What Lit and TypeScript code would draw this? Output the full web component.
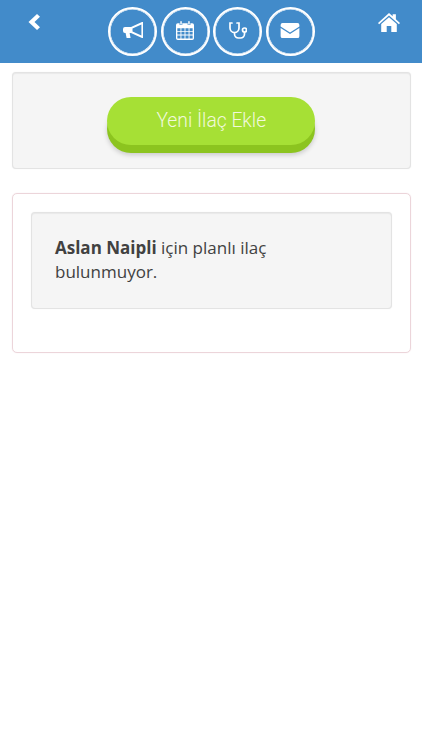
import { LitElement, html, css } from 'lit';
import { customElement } from 'lit/decorators.js';

@customElement('app-root')
export class AppRoot extends LitElement {
  static styles = css`
    :host {
      display: block;
      min-height: 750px;
      background: #fff;
      font-family: 'Open Sans', 'Noto Sans', sans-serif;
      color: #414141;
    }

    .topbar {
      height: 63px;
      box-sizing: border-box;
      background: #428bca;
      display: grid;
      grid-template-columns: 80px auto 1fr;
      padding: 7px 22px 0 28px;
    }

    .back {
      width: 12px;
      height: 16px;
      margin-top: 6.5px;
    }

    .home {
      justify-self: end;
      width: 22px;
      height: 19px;
      margin-top: 6px;
    }

    .nav {
      display: flex;
      gap: 3.5px;
    }

    .circle {
      width: 49px;
      height: 48.5px;
      box-sizing: border-box;
      border: 2px solid #fff;
      box-shadow: inset 0 0 0 0.6px #fff;
      border-radius: 50%;
      display: flex;
      align-items: center;
      justify-content: center;
      padding-bottom: 1px;
    }

    svg {
      display: block;
      fill: #fff;
    }

    .stetho {
      fill: none;
      stroke: #fff;
      stroke-width: 1.7;
    }

    .well {
      box-sizing: border-box;
      background: #f5f5f5;
      border: 1px solid #e3e3e3;
      border-radius: 4px;
      box-shadow: 0 0 1px #e3e3e3, inset 0 1px 1px rgba(0, 0, 0, 0.05);
    }

    .add {
      margin: 9px 11.5px 0 12px;
      height: 97px;
      display: flex;
      justify-content: center;
      padding-top: 24px;
    }

    .add-btn {
      width: 208px;
      height: 48px;
      border-radius: 24px;
      background: #a6e035;
      box-shadow: 0 8px 0 #8cc41f, 0 10px 5px rgba(0, 0, 0, 0.18);
      color: #f1f9dc;
      font-family: Roboto, sans-serif;
      font-weight: 300;
      font-size: 19.3px;
      line-height: 47px;
      text-align: center;
    }

    .panel {
      margin: 24px 11.5px 0 12px;
      height: 160px;
      box-sizing: border-box;
      border: 1px solid #ecd5da;
      border-radius: 5px;
      box-shadow: 0 0 1px #ecd5da;
      padding: 18px 18px 0;
    }

    .notice {
      height: 97px;
      padding: 23px 23px 0;
      font-size: 17px;
      line-height: 24px;
    }

    .notice p {
      margin: 0;
      max-width: 260px;
    }
  `;

  render() {
    return html`
      <header class="topbar">
        <svg class="back" viewBox="0 0 12 17" preserveAspectRatio="none"><path d="M9 0 L12 3 L6.5 8.5 L12 14 L9 17 L0.5 8.5 Z" /></svg>
        <nav class="nav">
          <div class="circle">
            <svg width="20" height="17" viewBox="0 0 20 17">
              <path fill-rule="evenodd" d="M20 0 V16 H19 L8 11 H6.6 L7.6 16 H3.6 L2.6 11 H2 A2 2 0 0 1 0 9 V7 A2 2 0 0 1 2 5 H8 L19 0 Z M18.4 2.4 L9.5 6.4 V9.6 L18.4 13.6 Z" />
            </svg>
          </div>
          <div class="circle">
            <svg width="18" height="19" viewBox="0 0 20 21">
              <path fill-rule="evenodd" d="M2 2.5 H4 V4.5 H7 V2.5 H13 V4.5 H16 V2.5 H18 A2 2 0 0 1 20 4.5 V19 A2 2 0 0 1 18 21 H2 A2 2 0 0 1 0 19 V4.5 A2 2 0 0 1 2 2.5 Z M1.5 8 V11 H5 V8 Z M6 8 V11 H9.5 V8 Z M10.5 8 V11 H14 V8 Z M15 8 V11 H18.5 V8 Z M1.5 12 V15 H5 V12 Z M6 12 V15 H9.5 V12 Z M10.5 12 V15 H14 V12 Z M15 12 V15 H18.5 V12 Z M1.5 16 V19.5 H5 V16 Z M6 16 V19.5 H9.5 V16 Z M10.5 16 V19.5 H14 V16 Z M15 16 V19.5 H18.5 V16 Z" />
              <rect x="4.8" y="0" width="1.6" height="4" rx="0.8" />
              <rect x="13.6" y="0" width="1.6" height="4" rx="0.8" />
            </svg>
          </div>
          <div class="circle">
            <svg class="stetho" width="18" height="17" viewBox="0 0 18 17">
              <path d="M3 1 H1 V6 A4.5 4.5 0 0 0 10 6 V1 H8" stroke-linecap="round" />
              <path d="M5.5 10.5 V12 A4 4 0 0 0 9.5 16 H11.5 A4 4 0 0 0 15.5 12 V10" />
              <circle cx="15.5" cy="8" r="2" />
            </svg>
          </div>
          <div class="circle">
            <svg width="20" height="15" viewBox="0 0 20 16">
              <path d="M2 0 H18 A2 2 0 0 1 20 2 V3.8 L10 10.2 L0 3.8 V2 A2 2 0 0 1 2 0 Z" />
              <path d="M0 5.2 L10 11.6 L20 5.2 V14 A2 2 0 0 1 18 16 H2 A2 2 0 0 1 0 14 Z" />
            </svg>
          </div>
        </nav>
        <svg class="home" viewBox="0 0 24 21" preserveAspectRatio="none">
          <path d="M12 0 L16 3.6 V1.5 H19.5 V6.8 L24 11 L22.8 12.4 L12 2.8 L1.2 12.4 L0 11 Z" />
          <path d="M12 4.8 L20.5 12.2 V21 H14.5 V14.5 H9.5 V21 H3.5 V12.2 Z" />
        </svg>
      </header>
      <section class="well add">
        <div class="add-btn">Yeni İlaç Ekle</div>
      </section>
      <section class="panel">
        <div class="well notice">
          <p><strong>Aslan Naipli</strong> için planlı ilaç bulunmuyor.</p>
        </div>
      </section>
    `;
  }
}
